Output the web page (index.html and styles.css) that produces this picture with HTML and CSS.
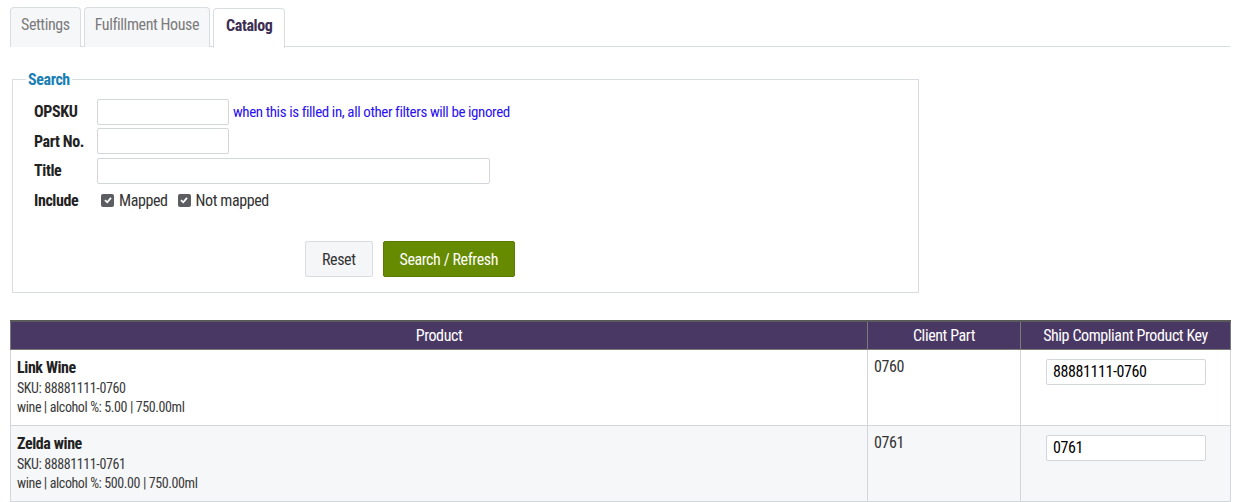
FILE: index.html
```html
<!DOCTYPE html>
<html>
<head>
    <title>Catalog</title>
    <link rel="stylesheet" href="styles.css">
</head>
<body>
    <div class="tabs">
        <a class="tab">Settings</a>
        <a class="tab">Fulfillment House</a>
        <a class="tab active">Catalog</a>
    </div>

    <fieldset class="search">
        <legend>Search</legend>
        <div class="row">
            <label>OPSKU</label>
            <input type="text" class="short">
            <span class="hint">when this is filled in, all other filters will be ignored</span>
        </div>
        <div class="row">
            <label>Part No.</label>
            <input type="text" class="short">
        </div>
        <div class="row">
            <label>Title</label>
            <input type="text" class="long">
        </div>
        <div class="row">
            <label>Include</label>
            <span class="check"><span class="box"><svg width="10" height="10" viewBox="0 0 10 10"><path d="M2 5.2 L4.2 7.3 L8 2.8" fill="none" stroke="#fff" stroke-width="1.8"/></svg></span>Mapped</span>
            <span class="check"><span class="box"><svg width="10" height="10" viewBox="0 0 10 10"><path d="M2 5.2 L4.2 7.3 L8 2.8" fill="none" stroke="#fff" stroke-width="1.8"/></svg></span>Not mapped</span>
        </div>
        <div class="actions">
            <button class="btn reset">Reset</button>
            <button class="btn primary">Search / Refresh</button>
        </div>
    </fieldset>

    <table class="catalog">
        <thead>
            <tr>
                <th class="col-product">Product</th>
                <th class="col-part">Client Part</th>
                <th class="col-key">Ship Compliant Product Key</th>
            </tr>
        </thead>
        <tbody>
            <tr>
                <td>
                    <div class="name">Link Wine</div>
                    <div class="meta">SKU: 88881111-0760</div>
                    <div class="meta">wine | alcohol %: 5.00 | 750.00ml</div>
                </td>
                <td class="part">0760</td>
                <td class="key"><input type="text" value="88881111-0760"></td>
            </tr>
            <tr class="alt">
                <td>
                    <div class="name">Zelda wine</div>
                    <div class="meta">SKU: 88881111-0761</div>
                    <div class="meta">wine | alcohol %: 500.00 | 750.00ml</div>
                </td>
                <td class="part">0761</td>
                <td class="key"><input type="text" value="0761"></td>
            </tr>
        </tbody>
    </table>
</body>
</html>
```
FILE: styles.css
```css
* {
    box-sizing: border-box;
}

body {
    margin: 0;
    padding: 7px 11px 0 10px;
    font-family: Roboto, "Liberation Sans", sans-serif;
    font-stretch: condensed;
    letter-spacing: -0.4px;
    font-size: 16px;
    color: #222;
    background: #fff;
    overflow: hidden;
}

input, button {
    letter-spacing: inherit;
}

.tabs {
    display: flex;
    gap: 3px;
    border-bottom: 1px solid #d9dce1;
    height: 40px;
}

.tab {
    display: block;
    padding: 7px 10px 0 10px;
    height: 40px;
    border: 1px solid #d9dce1;
    border-bottom: none;
    border-radius: 4px 4px 0 0;
    background: #f6f7f9;
    color: #7b7b7b;
}

.tab.active {
    background: #fff;
    color: #3d2f52;
    font-weight: bold;
    padding: 7px 12px 0 12px;
    position: relative;
    top: 1px;
}

.search {
    margin: 23px 0 0 2px;
    width: 907px;
    border: 1px solid #d9dce1;
    padding: 8px 21px 15px 21px;
}

.search legend {
    color: #1b7fb5;
    font-weight: bold;
    padding: 0 2px;
    margin-left: -8px;
}

.row {
    display: flex;
    align-items: center;
    height: 29.5px;
}

.row label {
    width: 63px;
    font-weight: bold;
    color: #222;
}

.row input {
    height: 26px;
    border: 1px solid #d3d6db;
    border-radius: 2px;
    font: inherit;
}

.short {
    width: 132px;
}

.long {
    width: 393px;
}

.hint {
    margin-left: 4px;
    color: #2a10f0;
    font-size: 15px;
}

.check {
    display: flex;
    align-items: center;
    margin-left: 4px;
    margin-right: 6px;
    color: #333;
}

.box {
    display: flex;
    align-items: center;
    justify-content: center;
    width: 13px;
    height: 13px;
    background: #5b5d60;
    border-radius: 2px;
    margin-right: 5px;
}

.actions {
    display: flex;
    gap: 10px;
    margin-top: 26px;
    padding-left: 271px;
}

.btn {
    height: 36px;
    font: inherit;
    font-size: 16px;
    border-radius: 2px;
    padding: 0 16px;
}

.reset {
    background: #f5f6f8;
    border: 1px solid #d9dce1;
    color: #333;
}

.primary {
    background: #668a00;
    border: 1px solid #5b7b00;
    color: #fff;
}

.catalog {
    margin-top: 27px;
    width: 1221px;
    border-collapse: collapse;
}

.catalog th {
    background: #4a3864;
    color: #fff;
    font-weight: normal;
    height: 28px;
    padding: 0 4px;
    border: 1px solid #7a7a7a;
    border-top: 2px solid #5a5a5a;
}

.col-product {
    width: 857px;
}

.col-part {
    width: 153px;
}

.catalog td {
    border: 1px solid #d3d6db;
    vertical-align: top;
    padding: 7px 5px 6px 6px;
    height: 76px;
}

.alt td {
    background: #f6f7f9;
}

.name {
    font-weight: bold;
    color: #222;
    line-height: 22px;
}

.meta {
    font-size: 14px;
    color: #3a3a3a;
    line-height: 19px;
}

.part {
    color: #333;
    padding-top: 8px;
}

.key {
    text-align: center;
}

.key input {
    width: 160px;
    height: 26px;
    border: 1px solid #d3d6db;
    border-radius: 2px;
    font: inherit;
    padding: 0 6px;
    margin-top: 2px;
}
```
